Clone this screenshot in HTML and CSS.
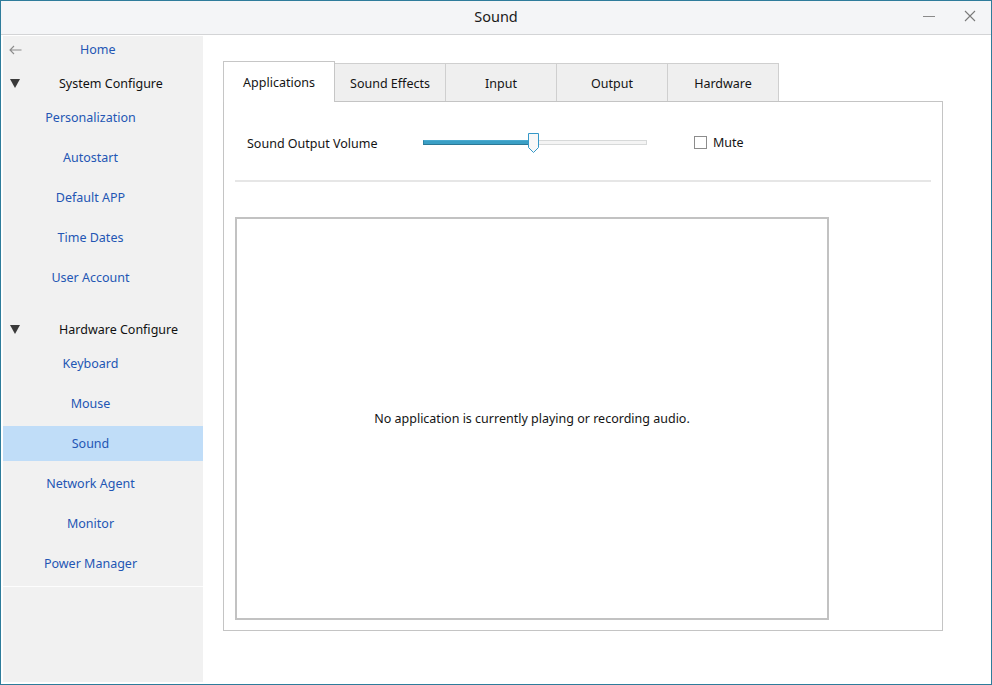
FILE: index.html
```html
<!DOCTYPE html>
<html>
<head>
<meta charset="utf-8">
<link rel="stylesheet" href="styles.css">
</head>
<body>
<div class="window">
  <div class="titlebar">
    <div class="tb-spacer"></div>
    <div class="title">Sound</div>
    <div class="controls">
      <svg class="ctl" width="12" height="12" viewBox="0 0 12 12"><line x1="0" y1="6.5" x2="12" y2="6.5" stroke="#8a8a8a" stroke-width="1"/></svg>
      <svg class="ctl" width="12" height="12" viewBox="0 0 12 12"><path d="M1 1 L11 11 M11 1 L1 11" stroke="#7a7a7a" stroke-width="1.1" fill="none"/></svg>
    </div>
  </div>
  <div class="content">
    <nav class="sidebar">
      <div class="home-row">
        <svg class="back" width="13" height="10" viewBox="0 0 13 10"><path d="M12.5 5 H1.2 M5 1 L1 5 L5 9" stroke="#8c8c8c" stroke-width="1.1" fill="none"/></svg>
        <span class="home-text">Home</span>
      </div>
      <div class="group-head first">
        <svg class="tri" width="10" height="9" viewBox="0 0 10 9"><polygon points="0,0 10,0 5,9" fill="#3a3a3a"/></svg>
        <span class="group-text">System Configure</span>
      </div>
      <div class="item"><span>Personalization</span></div>
      <div class="item"><span>Autostart</span></div>
      <div class="item"><span>Default APP</span></div>
      <div class="item"><span>Time Dates</span></div>
      <div class="item"><span>User Account</span></div>
      <div class="group-head second">
        <svg class="tri" width="10" height="9" viewBox="0 0 10 9"><polygon points="0,0 10,0 5,9" fill="#3a3a3a"/></svg>
        <span class="group-text">Hardware Configure</span>
      </div>
      <div class="item"><span>Keyboard</span></div>
      <div class="item"><span>Mouse</span></div>
      <div class="item selected"><span>Sound</span></div>
      <div class="item"><span>Network Agent</span></div>
      <div class="item"><span>Monitor</span></div>
      <div class="item"><span>Power Manager</span></div>
      <div class="side-sep"></div>
    </nav>
    <main class="main">
      <div class="tabs">
        <div class="tab active">Applications</div>
        <div class="tab">Sound Effects</div>
        <div class="tab">Input</div>
        <div class="tab">Output</div>
        <div class="tab">Hardware</div>
      </div>
      <div class="pane">
        <div class="volume-row">
          <span class="vol-label">Sound Output Volume</span>
          <div class="slider">
            <div class="groove"><div class="fill" style="width:110px"></div></div>
            <svg class="handle" width="12" height="20" viewBox="0 0 12 20"><path d="M0.5 0.5 H10.5 V14.5 L5.5 19.5 L0.5 14.5 Z" fill="#f8f8f8" stroke="#3598c8" stroke-width="1"/></svg>
          </div>
          <label class="mute"><span class="checkbox"></span><span>Mute</span></label>
        </div>
        <div class="sep"></div>
        <div class="app-box">No application is currently playing or recording audio.</div>
      </div>
    </main>
  </div>
</div>
</body>
</html>
```

FILE: styles.css
```css
html, body {
  margin: 0;
  padding: 0;
  background: #ffffff;
}
body {
  font-family: "Noto Sans", "Open Sans", sans-serif;
  font-size: 12.5px;
  color: #141414;
}
.window {
  width: 992px;
  height: 685px;
  box-sizing: border-box;
  border: 1px solid #2e7c9b;
  display: flex;
  flex-direction: column;
  background: #ffffff;
  overflow: hidden;
}
.titlebar {
  height: 33px;
  flex: none;
  background: #f4f5f7;
  border-bottom: 1px solid #d3d4d6;
  display: flex;
  align-items: center;
}
.tb-spacer {
  width: 68px;
}
.title {
  flex: 1;
  text-align: center;
  font-size: 14.5px;
  color: #1a1a1a;
  padding-bottom: 3px;
}
.controls {
  width: 68px;
  box-sizing: border-box;
  padding-right: 15px;
  padding-bottom: 4px;
  display: flex;
  justify-content: flex-end;
  align-items: center;
  gap: 29px;
}
.ctl {
  display: block;
}
.content {
  flex: 1;
  display: flex;
  padding: 1px 0 2px 2px;
  min-height: 0;
}
.sidebar {
  width: 200px;
  flex: none;
  background: #f1f1f1;
  display: flex;
  flex-direction: column;
}
.home-row {
  height: 27px;
  display: flex;
  align-items: center;
  padding-left: 6px;
}
.back {
  display: block;
}
.home-text {
  margin-left: 58px;
  color: #2356b4;
}
.group-head {
  display: flex;
  align-items: center;
  box-sizing: border-box;
  padding-left: 7px;
  color: #111;
}
.group-head.first {
  height: 34px;
  padding-top: 6px;
}
.group-head.second {
  height: 46px;
  padding-top: 18px;
}
.tri {
  display: block;
}
.group-text {
  margin-left: 39px;
}
.item {
  height: 35px;
  margin: 3px 0 2px;
  display: flex;
  align-items: center;
  justify-content: center;
  padding-right: 25px;
  color: #2356b4;
}
.item.selected {
  background: #c0ddf8;
}
.side-sep {
  height: 1px;
  background: #fdfdfd;
  margin-top: 3px;
}
.main {
  flex: 1;
  padding: 25px 0 0 20px;
  background: #ffffff;
}
.tabs {
  display: flex;
  align-items: flex-end;
  height: 40px;
}
.tab {
  width: 111px;
  height: 38px;
  box-sizing: border-box;
  background: #efefef;
  border-top: 1px solid #cfcfcf;
  border-right: 1px solid #cfcfcf;
  display: flex;
  align-items: center;
  justify-content: center;
  color: #141414;
  padding-top: 1px;
}
.tab.active {
  width: 112px;
  height: 41px;
  margin-bottom: -1px;
  background: #ffffff;
  border-left: 1px solid #c6c6c6;
  border-top: 1px solid #c6c6c6;
  border-right: 1px solid #c6c6c6;
  position: relative;
  z-index: 1;
  padding-top: 1px;
  padding-bottom: 1px;
}
.pane {
  width: 720px;
  height: 530px;
  box-sizing: border-box;
  border: 1px solid #c4c4c4;
  padding: 0 11px;
}
.volume-row {
  height: 78px;
  box-sizing: border-box;
  padding: 4px 0 0 12px;
  display: flex;
  align-items: center;
}
.vol-label {
  width: 176px;
  flex: none;
}
.slider {
  position: relative;
  width: 224px;
  height: 20px;
  flex: none;
}
.groove {
  position: absolute;
  left: 0;
  right: 0;
  top: 7px;
  height: 5px;
  box-sizing: border-box;
  border: 1px solid #d7d9d9;
  background: #f4f4f4;
}
.fill {
  position: absolute;
  left: -1px;
  top: -1px;
  height: 5px;
  box-sizing: border-box;
  background: #3a9fc5;
  border-top: 1px solid #49aad0;
  border-bottom: 1px solid #2b7896;
  border-left: 1px solid #2f84a4;
}
.handle {
  position: absolute;
  left: 105px;
  top: 0;
  display: block;
}
.mute {
  display: flex;
  align-items: center;
  margin-left: 47px;
  gap: 6px;
  margin-top: -2px;
}
.checkbox {
  width: 13px;
  height: 13px;
  box-sizing: border-box;
  border: 1px solid #8c8c8c;
  background: #fff;
}
.sep {
  height: 2px;
  background: #e6e6e6;
}
.app-box {
  margin-top: 35px;
  width: 594px;
  height: 403px;
  box-sizing: border-box;
  border: 2px solid #c2c2c2;
  display: flex;
  align-items: center;
  justify-content: center;
  color: #141414;
}
```
